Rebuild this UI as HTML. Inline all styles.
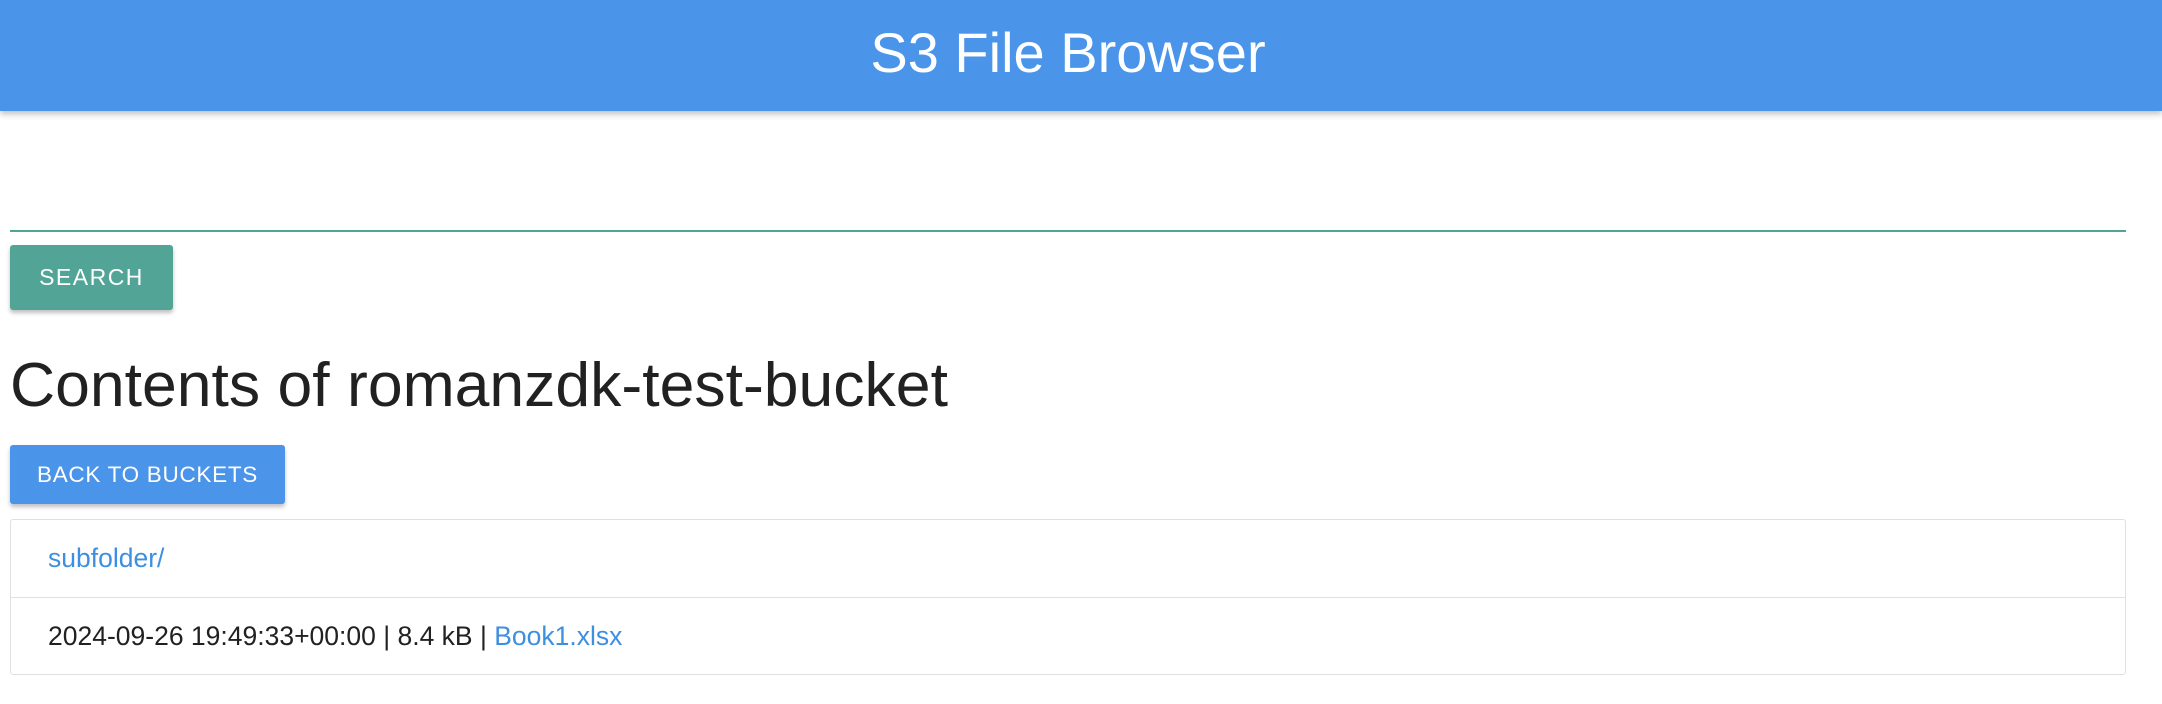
<!DOCTYPE html>
<html><head><meta charset="utf-8"><style>
*{margin:0;padding:0;box-sizing:border-box}
body{width:2162px;height:704px;background:#fff;font-family:"Liberation Sans",sans-serif;position:relative;overflow:hidden;color:#212121}
.hdr{position:absolute;left:0;top:0;width:2162px;height:111px;background:#4a94ea;box-shadow:0 3px 6px rgba(0,0,0,.25)}
.hdr span{position:absolute;left:0;width:2136px;text-align:center;top:21px;font-size:56px;color:#fff;line-height:64px}
.line{position:absolute;left:10px;top:230px;width:2116px;height:2px;background:#52a596}
.btn{position:absolute;color:#fff;text-align:center;border-radius:3px;box-shadow:0 3px 4px rgba(0,0,0,.25)}
.s{left:10px;top:245px;width:163px;height:65px;line-height:65px;background:#52a596;font-size:23px;letter-spacing:1.5px}
.b{left:10px;top:445px;width:275px;height:59px;line-height:59px;background:#4a94ea;font-size:22.5px;letter-spacing:0.7px}
h1{position:absolute;left:10px;top:348px;font-weight:normal;font-size:62.5px;line-height:74px;color:#212121}
.list{position:absolute;left:10px;top:519px;width:2116px;height:156px;border:1px solid #e0e0e0;border-radius:3px}
.row{height:77px;line-height:77px;padding-left:37px;font-size:26.5px}
.row+.row{border-top:1px solid #e0e0e0}
a{color:#3d8fe0;text-decoration:none}
</style></head><body>
<div class="hdr"><span>S3 File Browser</span></div>
<div class="line"></div>
<div class="btn s">SEARCH</div>
<h1>Contents of romanzdk-test-bucket</h1>
<div class="btn b">BACK TO BUCKETS</div>
<div class="list">
<div class="row"><a>subfolder/</a></div>
<div class="row">2024-09-26 19:49:33+00:00 | 8.4 kB | <a>Book1.xlsx</a></div>
</div>
</body></html>
